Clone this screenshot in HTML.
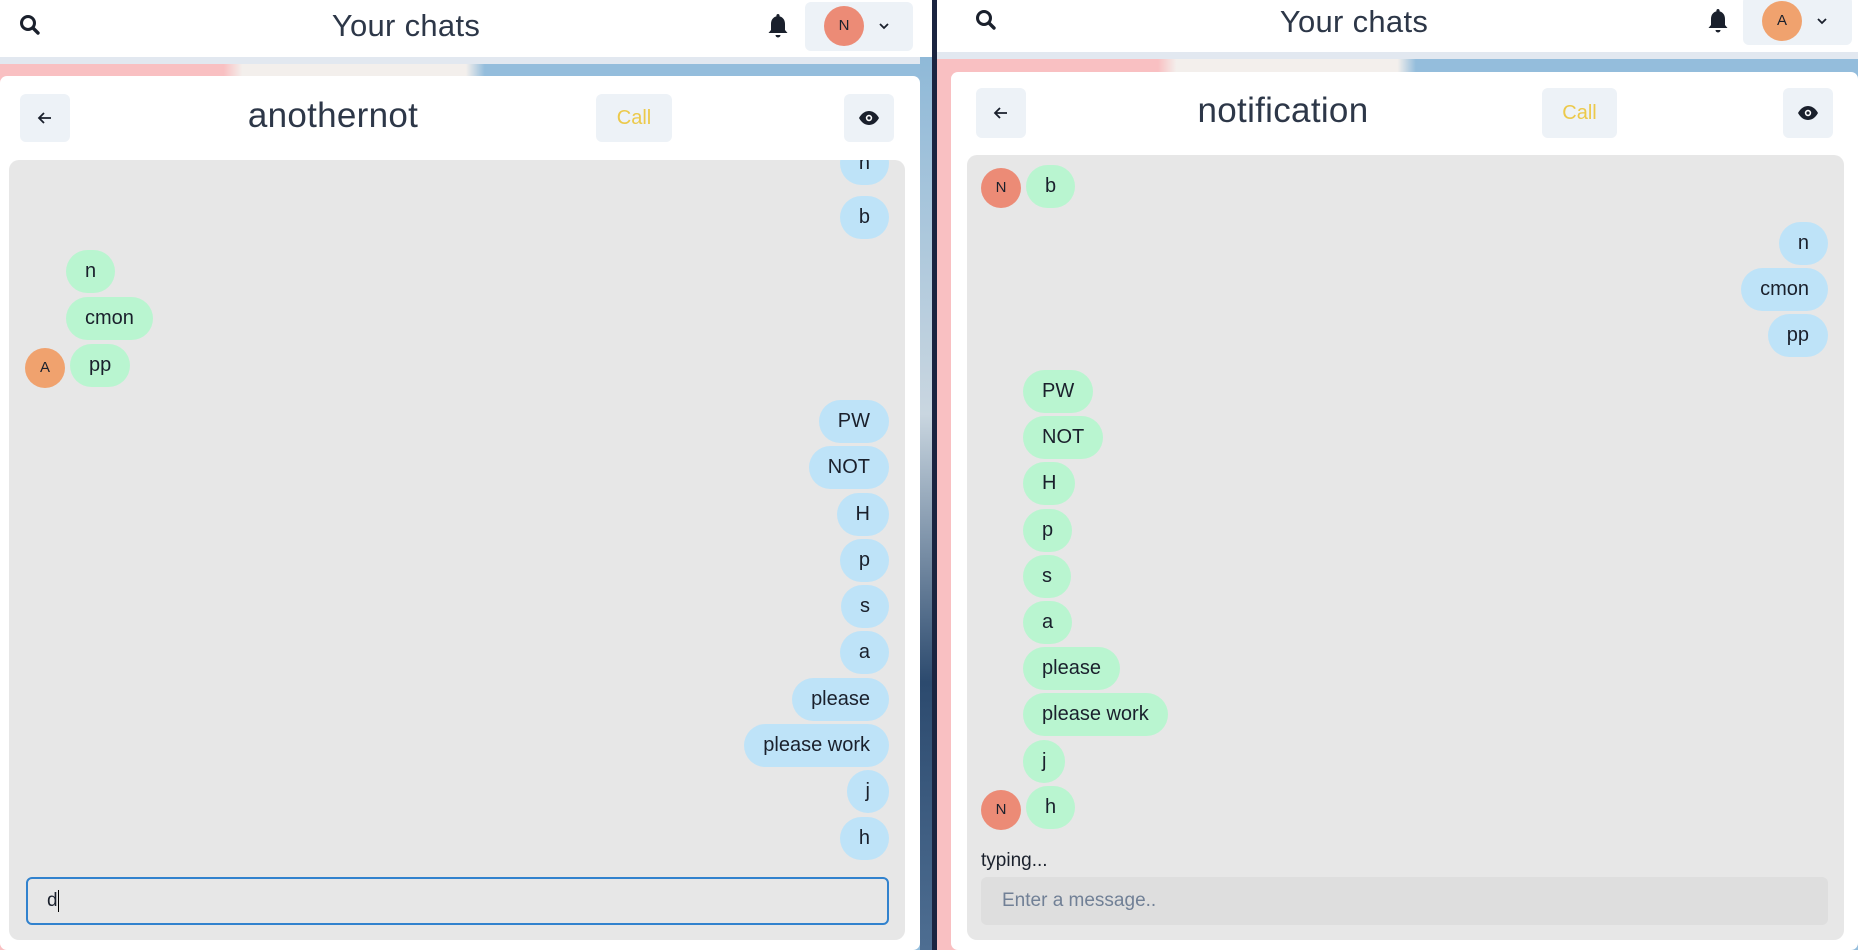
<!DOCTYPE html>
<html><head><meta charset="utf-8"><style>
*{box-sizing:border-box;margin:0;padding:0}
body{width:1858px;height:950px;overflow:hidden;position:relative;background:#fff;font-family:"Liberation Sans",sans-serif;color:#1a202c}
.abs{position:absolute}
.bg{background:linear-gradient(90deg,#f9c0c2 0%,#f9c0c2 24%,#f3efec 26%,#f3efec 50%,#94bddc 52%,#94bddc 100%)}
.hdr{background:#fff}
.strip{background:#e2e8f0}
.title{font-weight:300;color:#2d3748;text-align:center;letter-spacing:0.3px}
.btn{background:#edf2f7;border-radius:6px;display:flex;align-items:center;justify-content:center}
.card{background:#fff;border-radius:7px}
.chat{background:#e7e7e7;border-radius:10px}
.b{position:absolute;height:43px;border-radius:22px;font-size:20px;line-height:43px;padding:0 19px;color:#1a202c;white-space:nowrap}
.g{background:#b9f5d0}
.u{background:#bee3f8}
.av{position:absolute;width:40px;height:40px;border-radius:50%;font-size:15px;text-align:center;line-height:40px;color:#1a202c}
</style></head><body>
<!-- left window -->
<div class="abs bg" style="left:0;top:57px;width:932px;height:893px"></div>
<div class="abs hdr" style="left:0;top:0;width:932px;height:57px"></div>
<div class="abs strip" style="left:0;top:57px;width:932px;height:7px"></div>
<svg class="abs" style="left:18px;top:13px" width="24" height="24" viewBox="0 0 24 24"><circle cx="10" cy="10" r="6.5" fill="none" stroke="#1a202c" stroke-width="3"/><path d="M15 15l5 5" stroke="#1a202c" stroke-width="3.4" stroke-linecap="round"/></svg>
<div class="abs title" style="left:256px;top:8px;width:300px;font-size:31px">Your chats</div>
<svg class="abs" style="left:766px;top:12px" width="24" height="28" viewBox="0 0 24 28"><path d="M12 2c-1 0-1.6.7-1.6 1.6v.8C6.8 5.3 5 8.3 5 12v6l-2.5 3h19L19 18v-6c0-3.7-1.8-6.7-5.4-7.6v-.8C13.6 2.7 13 2 12 2z" fill="#1a202c"/><path d="M9.5 23a2.5 2.5 0 005 0z" fill="#1a202c"/></svg>
<div class="abs btn" style="left:805px;top:2px;width:108px;height:49px"></div>
<div class="av" style="left:824px;top:6px;background:#ec8b76">N</div>
<svg class="abs" style="left:878px;top:21px" width="12" height="10" viewBox="0 0 12 10"><path d="M2 3l4 4 4-4" fill="none" stroke="#1a202c" stroke-width="1.8"/></svg>

<div class="abs card" style="left:0;top:76px;width:920px;height:874px"></div>
<div class="abs btn" style="left:20px;top:94px;width:50px;height:48px"><svg width="18" height="18" viewBox="0 0 18 18"><path d="M15 9H3M8 4L3 9l5 5" fill="none" stroke="#1a202c" stroke-width="1.8"/></svg></div>
<div class="abs title" style="left:183px;top:96px;width:300px;font-size:35px">anothernot</div>
<div class="abs btn" style="left:596px;top:94px;width:76px;height:48px;color:#ecc94b;font-size:20px">Call</div>
<div class="abs btn" style="left:844px;top:94px;width:50px;height:48px"><svg width="22" height="16" viewBox="0 0 22 16"><path d="M1 8C4 2.5 8 1 11 1s7 1.5 10 7c-3 5.5-7 7-10 7S4 13.5 1 8z" fill="#1a202c"/><circle cx="11" cy="8" r="3.2" fill="#fff"/><circle cx="11" cy="8" r="1.6" fill="#1a202c"/></svg></div>
<div class="abs chat" style="left:9px;top:160px;width:896px;height:780px;overflow:hidden">
 <div class="b u" style="right:16px;top:-18px">n</div>
 <div class="b u" style="right:16px;top:36px">b</div>
 <div class="b g" style="left:57px;top:90px">n</div>
 <div class="b g" style="left:57px;top:137px">cmon</div>
 <div class="av" style="left:16px;top:188px;background:#f0a26e">A</div>
 <div class="b g" style="left:61px;top:184px">pp</div>
 <div class="b u" style="right:16px;top:240px">PW</div>
 <div class="b u" style="right:16px;top:286px">NOT</div>
 <div class="b u" style="right:16px;top:333px">H</div>
 <div class="b u" style="right:16px;top:379px">p</div>
 <div class="b u" style="right:16px;top:425px">s</div>
 <div class="b u" style="right:16px;top:471px">a</div>
 <div class="b u" style="right:16px;top:518px">please</div>
 <div class="b u" style="right:16px;top:564px">please work</div>
 <div class="b u" style="right:16px;top:610px">j</div>
 <div class="b u" style="right:16px;top:657px">h</div>
 <div class="abs" style="left:17px;top:717px;width:863px;height:48px;border:2px solid #3182ce;border-radius:6px;font-size:19px;line-height:44px;padding-left:19px">d<span style="display:inline-block;width:1px;height:22px;background:#000;vertical-align:middle"></span></div>
</div>

<!-- divider -->
<div class="abs" style="left:920px;top:57px;width:12px;height:893px;background:linear-gradient(180deg,#8fb9d8,#c9d6e0 40%,#2c4a6e 70%,#4e6e92)"></div>
<div class="abs" style="left:932px;top:0;width:5px;height:950px;background:#1b2440"></div>

<!-- right window -->
<div class="abs bg" style="left:937px;top:52px;width:921px;height:898px"></div>
<div class="abs hdr" style="left:937px;top:0;width:921px;height:52px"></div>
<div class="abs strip" style="left:937px;top:52px;width:921px;height:7px"></div>
<svg class="abs" style="left:974px;top:8px" width="24" height="24" viewBox="0 0 24 24"><circle cx="10" cy="10" r="6.5" fill="none" stroke="#1a202c" stroke-width="3"/><path d="M15 15l5 5" stroke="#1a202c" stroke-width="3.4" stroke-linecap="round"/></svg>
<div class="abs title" style="left:1204px;top:4px;width:300px;font-size:31px">Your chats</div>
<svg class="abs" style="left:1706px;top:7px" width="24" height="28" viewBox="0 0 24 28"><path d="M12 2c-1 0-1.6.7-1.6 1.6v.8C6.8 5.3 5 8.3 5 12v6l-2.5 3h19L19 18v-6c0-3.7-1.8-6.7-5.4-7.6v-.8C13.6 2.7 13 2 12 2z" fill="#1a202c"/><path d="M9.5 23a2.5 2.5 0 005 0z" fill="#1a202c"/></svg>
<div class="abs btn" style="left:1743px;top:-4px;width:109px;height:49px"></div>
<div class="av" style="left:1762px;top:1px;background:#f0a26e">A</div>
<svg class="abs" style="left:1816px;top:16px" width="12" height="10" viewBox="0 0 12 10"><path d="M2 3l4 4 4-4" fill="none" stroke="#1a202c" stroke-width="1.8"/></svg>

<div class="abs card" style="left:951px;top:72px;width:907px;height:878px"></div>
<div class="abs btn" style="left:976px;top:88px;width:50px;height:50px"><svg width="18" height="18" viewBox="0 0 18 18"><path d="M15 9H3M8 4L3 9l5 5" fill="none" stroke="#1a202c" stroke-width="1.8"/></svg></div>
<div class="abs title" style="left:1133px;top:91px;width:300px;font-size:35px">notification</div>
<div class="abs btn" style="left:1542px;top:88px;width:75px;height:50px;color:#ecc94b;font-size:20px">Call</div>
<div class="abs btn" style="left:1783px;top:88px;width:50px;height:50px"><svg width="22" height="16" viewBox="0 0 22 16"><path d="M1 8C4 2.5 8 1 11 1s7 1.5 10 7c-3 5.5-7 7-10 7S4 13.5 1 8z" fill="#1a202c"/><circle cx="11" cy="8" r="3.2" fill="#fff"/><circle cx="11" cy="8" r="1.6" fill="#1a202c"/></svg></div>
<div class="abs chat" style="left:967px;top:155px;width:877px;height:785px;overflow:hidden">
 <div class="av" style="left:14px;top:13px;background:#ec8b76">N</div>
 <div class="b g" style="left:59px;top:10px">b</div>
 <div class="b u" style="right:16px;top:67px">n</div>
 <div class="b u" style="right:16px;top:113px">cmon</div>
 <div class="b u" style="right:16px;top:159px">pp</div>
 <div class="b g" style="left:56px;top:215px">PW</div>
 <div class="b g" style="left:56px;top:261px">NOT</div>
 <div class="b g" style="left:56px;top:307px">H</div>
 <div class="b g" style="left:56px;top:354px">p</div>
 <div class="b g" style="left:56px;top:400px">s</div>
 <div class="b g" style="left:56px;top:446px">a</div>
 <div class="b g" style="left:56px;top:492px">please</div>
 <div class="b g" style="left:56px;top:538px">please work</div>
 <div class="b g" style="left:56px;top:585px">j</div>
 <div class="av" style="left:14px;top:635px;background:#ec8b76">N</div>
 <div class="b g" style="left:59px;top:631px">h</div>
 <div class="abs" style="left:14px;top:695px;font-size:19px">typing...</div>
 <div class="abs" style="left:14px;top:722px;width:847px;height:48px;background:#dedede;border-radius:6px;font-size:19px;line-height:48px;padding-left:21px;color:#718096">Enter a message..</div>
</div>
</body></html>
